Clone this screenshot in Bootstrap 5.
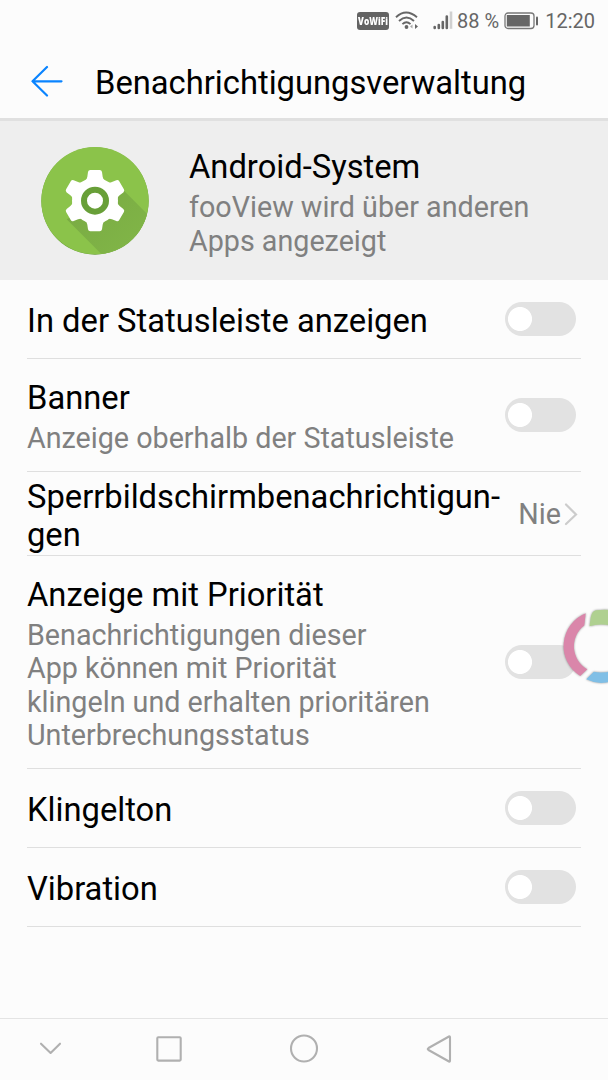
<!DOCTYPE html>
<html lang="de">
<head>
<meta charset="utf-8">
<meta name="viewport" content="width=device-width, initial-scale=1">
<title>Benachrichtigungsverwaltung</title>
<link href="https://cdn.jsdelivr.net/npm/bootstrap@5.3.0/dist/css/bootstrap.min.css" rel="stylesheet">
<style>
body{font-family:Roboto,"Liberation Sans",sans-serif;background:#fcfcfc;color:#000;height:1080px;overflow:hidden}
svg{display:block;flex:none}
.status{height:42px;color:#666;font-size:20px;line-height:24px;padding-right:13px}
.vowifi{width:32px;height:18px;background:#636363;color:#fff;border-radius:3px;font:800 11px/18px "Open Sans",Roboto,sans-serif;text-align:center}
.vowifi span{display:block;transform:scaleX(.76);transform-origin:center;margin:0 -8px}
.topbar{height:79px;border-bottom:3px solid #e0e0e0;padding-left:30px}
.ttl{font-size:32.72px;line-height:38px;white-space:nowrap}
.desc{font-size:28.7px;line-height:33.2px;color:#808080;white-space:nowrap}
.appinfo{height:159px;background:#eee;padding-left:41px}
.opts{padding:0 27px}
.opt{border-bottom:1px solid #dfdfdf;padding-right:5px}
.form-switch .form-check-input.sw{width:71px;height:34px;margin:0 0 1px;border:0;background-color:#e2e2e2;border-radius:17px;background-image:radial-gradient(circle at 15px 17px,#fff 11.6px,transparent 12.4px);background-size:100% 100%;background-position:0 0;opacity:1}
.navkeys{height:62px;border-top:1px solid #e4e4e4}
.bubble{position:absolute;left:560px;top:604px}
</style>
</head>
<body class="d-flex flex-column position-relative">
<div class="status d-flex align-items-center justify-content-end">
  <div class="vowifi"><span>VoWiFi</span></div>
  <svg width="24" height="22" viewBox="0 0 24 22" style="margin-left:6px" fill="none" stroke="#666" stroke-width="1.9"><path d="M1 7.3Q11-2.3 22 7.3M4 11Q11.5 4.2 19 11M7.4 14.1Q11.5 10.5 15.5 14.1"/><circle cx="11.5" cy="17" r="1.9" fill="#666" stroke="none"/><path d="M20 14v5l3-2.5z" fill="#666" stroke="none"/><path d="M17.5 14.5v4L15 16.5z" fill="#aaa" stroke="none"/></svg>
  <svg width="20" height="22" viewBox="0 0 20 22" style="margin-left:14px" stroke-width="2.6" stroke-linecap="round" stroke="#666"><path d="M1.7 18v-1M5.8 18v-3M9.8 18v-6M13.8 18V6.5"/><path d="M18 18.8V1.5" stroke="#d0d0d0" stroke-linecap="butt"/></svg>
  <span style="margin-left:4px">88 %</span>
  <svg width="35" height="18" viewBox="0 0 35 18" style="margin-left:5px"><rect x="1" y="1" width="29" height="15.5" rx="3" fill="#fcfcfc" stroke="#777" stroke-width="1.3"/><path d="M2.8 3h23v11.5h-23z" fill="#666"/><rect x="32" y="4.5" width="2" height="9" rx="1" fill="#666"/></svg>
  <span style="margin-left:6px">12:20</span>
</div>
<header class="topbar d-flex align-items-center">
  <svg width="34" height="32" viewBox="0 0 34 32" style="margin-top:2px" fill="none" stroke="#0a84ff" stroke-width="2.2" stroke-linecap="round" stroke-linejoin="round"><path d="M17 2 2.5 16.3 17 30.5M2.5 16.3H31.5"/></svg>
  <h1 class="ttl fw-normal mb-0" style="margin-left:31px;padding-top:6px">Benachrichtigungsverwaltung</h1>
</header>
<section class="appinfo d-flex align-items-center">
  <svg width="108" height="108" viewBox="33 36 324 324">
    <defs><clipPath id="disc"><circle cx="195" cy="197" r="161"/></clipPath><linearGradient id="shade" x1="0" y1="0" x2="1" y2="1"><stop stop-color="#78a943"/><stop offset="1" stop-color="#85bb49"/></linearGradient></defs>
    <circle cx="195" cy="198" r="161" fill="#689f38"/><circle cx="195" cy="197" r="161" fill="#8bc34a"/>
    <path d="M110 253 280 165 420 305V430H287z" fill="url(#shade)" clip-path="url(#disc)"/>
    <g fill="#fff"><circle cx="195" cy="197" r="69"/>
    <path id="tooth" d="M165 137Q171 133 172 125L174 111Q175 105 181 105H209Q215 105 216 111L218 125Q219 133 225 137V160H165z"/><use href="#tooth" transform="rotate(60 195 197)"/><use href="#tooth" transform="rotate(120 195 197)"/><use href="#tooth" transform="rotate(180 195 197)"/><use href="#tooth" transform="rotate(240 195 197)"/><use href="#tooth" transform="rotate(300 195 197)"/></g>
    <circle cx="195" cy="197" r="33" fill="#fff" stroke="#689f38" stroke-width="18"/>
  </svg>
  <div style="margin-left:40px;padding-top:5px"><div class="ttl">Android-System</div><div class="desc" style="margin-top:5px">fooView wird über anderen<br>Apps angezeigt</div></div>
</section>
<main class="opts flex-grow-1">
  <div class="opt d-flex align-items-center justify-content-between" style="height:79px"><div class="ttl" style="padding-top:4px">In der Statusleiste anzeigen</div><div class="form-check form-switch p-0 m-0"><input class="form-check-input sw" type="checkbox" aria-label="In der Statusleiste anzeigen"></div></div>
  <div class="opt d-flex align-items-center justify-content-between" style="height:113px"><div style="padding-top:5px"><div class="ttl">Banner</div><div class="desc" style="margin-top:5px">Anzeige oberhalb der Statusleiste</div></div><div class="form-check form-switch p-0 m-0"><input class="form-check-input sw" type="checkbox" aria-label="Banner"></div></div>
  <div class="opt d-flex align-items-center justify-content-between" style="height:84px;padding-right:3px"><div class="ttl" style="padding-top:4px">Sperrbildschirmbenachrichtigun-<br>gen</div><div class="d-flex align-items-center" style="padding-top:3px"><span class="desc">Nie</span><svg width="17" height="24" viewBox="0 0 17 24" fill="none" stroke="#ccc" stroke-width="2.2" stroke-linecap="round"><path d="M5 1.5 15 11.5 5 21"/></svg></div></div>
  <div class="opt d-flex align-items-center justify-content-between" style="height:213px"><div style="padding-top:4px"><div class="ttl">Anzeige mit Priorität</div><div class="desc" style="margin-top:5px">Benachrichtigungen dieser<br>App können mit Priorität<br>klingeln und erhalten prioritären<br>Unterbrechungsstatus</div></div><div class="form-check form-switch p-0 m-0"><input class="form-check-input sw" type="checkbox" aria-label="Anzeige mit Priorität"></div></div>
  <div class="opt d-flex align-items-center justify-content-between" style="height:79px"><div class="ttl" style="padding-top:4px">Klingelton</div><div class="form-check form-switch p-0 m-0"><input class="form-check-input sw" type="checkbox" aria-label="Klingelton"></div></div>
  <div class="opt d-flex align-items-center justify-content-between" style="height:79px"><div class="ttl" style="padding-top:4px">Vibration</div><div class="form-check form-switch p-0 m-0"><input class="form-check-input sw" type="checkbox" aria-label="Vibration"></div></div>
</main>
<footer class="navkeys d-flex align-items-center">
  <svg width="608" height="60" viewBox="0 1020 608 60" fill="none" stroke="#b0b0b0" stroke-width="2.1" stroke-linecap="round" stroke-linejoin="round"><path d="M41 1043.7 50.6 1053 60 1043.7"/><rect x="157.3" y="1037.2" width="23.4" height="23.4" rx="1"/><circle cx="304" cy="1048.5" r="13"/><path d="M449 1036.5Q450 1036 450 1037.5V1060.5Q450 1062 449 1061.5L428.5 1050Q427 1049 428.5 1048z"/></svg>
</footer>
<div class="bubble">
  <svg width="48" height="84" viewBox="560 604 48 84"><circle cx="600.5" cy="646.5" r="28" fill="#fcfcfc"/><g style="filter:drop-shadow(0 .5px .8px rgba(0,0,0,.4))"><path d="M585.7 613.3A35.3 35.3 0 0 0 580.2 676L587.4 669.3A26.2 26.2 0 0 1 584.3 625.5z" fill="#da86aa"/><path d="M589.5 626.2 590.8 617Q592 611 596 610.2Q602 609.6 612 610V626Q600 623 589.5 626.2z" fill="#afd090"/><path d="M586.2 679.3 593.8 671.8Q602 673.6 612 671V681Q599 685.5 586.2 679.3z" fill="#80bfe6"/></g></svg>
</div>
<script src="https://cdn.jsdelivr.net/npm/bootstrap@5.3.0/dist/js/bootstrap.bundle.min.js"></script>
</body>
</html>
